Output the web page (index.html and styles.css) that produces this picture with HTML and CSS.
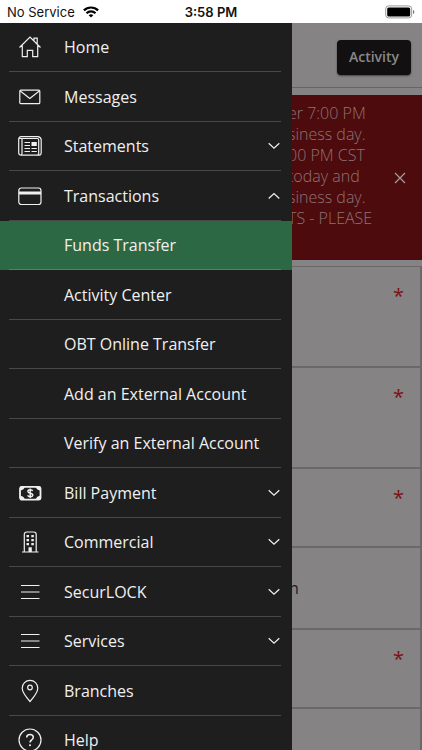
FILE: index.html
```html
<!DOCTYPE html>
<html lang="en">
<head>
<meta charset="utf-8">
<meta name="viewport" content="width=device-width, initial-scale=1">
<title>Funds Transfer</title>
<link rel="stylesheet" href="styles.css">
</head>
<body>
<div class="status">
  <div class="carrier">No Service
    <svg width="16" height="12" viewBox="0 0 16 12" fill="none" stroke="#000" stroke-width="2.2"><path d="M.9 4.4a10.2 10.2 0 0 1 14.2 0M3.5 7.2a6.4 6.4 0 0 1 9 0"/><path d="M8 11.6 5.7 9.3a3.3 3.3 0 0 1 4.6 0z" fill="#000" stroke="none"/></svg>
  </div>
  <div class="time">3:58 PM</div>
  <div class="battery">
    <svg width="30" height="14" viewBox="0 0 30 14"><rect x=".7" y=".9" width="26" height="12" rx="3" fill="none" stroke="#999" stroke-width="1"/><rect x="2.2" y="2.4" width="23" height="9" rx="1.5"/><path d="M28 5v4q1.400-.6 1.400-2T28 5" fill="#777"/></svg>
  </div>
</div>
<div class="app">
  <nav class="drawer">
    <ul class="menu">
      <li><a class="item" href="#home"><svg class="icon" viewBox="0 0 24 24"><path d="M1.500 12.500 12 2l10.500 10.500M4.300 10.500v11.200h5v-6.400h5.400v6.400h5V10.500M16 5.500V3.200h3.200v5.600"/></svg><span>Home</span></a></li>
      <li><a class="item" href="#messages"><svg class="icon" viewBox="0 0 24 24"><rect x="1.800" y="5.200" width="20" height="13.500" rx="1"/><path d="m2.300 6 9.500 7.500L21.300 6"/></svg><span>Messages</span></a></li>
      <li><button class="item" aria-expanded="false"><svg class="icon" viewBox="0 0 24 24"><path d="M3.200 2.700h16.500q3 .3 3.500 3v13q0 2.500-2.500 2.500H3.200q-2.500 0-2.500-2.500V5.200q0-2.500 2.500-2.500zM1.500 4.500h17.700q1.500 0 1.500 1.500v13q.2 1.500-1 1.700M4 5v14.500q-.2 1.500-1.500 1.500M6.500 8.500H12M6.500 11.500H12M6.500 14.500H12M6.500 17.500H12M13.500 14.500h5.300M13.500 17.500h5.300"/><path class="solid" d="M13.500 8h5.300v4h-5.300z"/></svg><span>Statements</span><svg class="chevron" viewBox="0 0 14 14"><path d="m1.700 4.200 5.300 5 5.300-5"/></svg></button></li>
      <li><button class="item" aria-expanded="true"><svg class="icon" viewBox="0 0 24 24"><rect x=".8" y="4" width="22.200" height="16.500" rx="2.500"/><path class="solid" d="M1 7.500h22v3H1z"/></svg><span>Transactions</span><svg class="chevron" viewBox="0 0 14 14"><path d="m1.700 9.500 5.300-5 5.300 5"/></svg></button></li>
      <li class="active"><a class="item sub" href="#transfer" aria-current="page"><span>Funds Transfer</span></a></li>
      <li><a class="item sub" href="#activity"><span>Activity Center</span></a></li>
      <li><a class="item sub" href="#obt"><span>OBT Online Transfer</span></a></li>
      <li><a class="item sub" href="#add"><span>Add an External Account</span></a></li>
      <li><a class="item sub" href="#verify"><span>Verify an External Account</span></a></li>
      <li><button class="item" aria-expanded="false"><svg class="icon" viewBox="0 0 24 24"><rect x="2" y="5.800" width="20.500" height="12.800" rx="2" stroke-width="1.800"/><path class="solid" d="M2 5.500h5q-1 3.500-4.500 4zM22.500 5.500h-5q1 3.500 4.500 4zM2 18.800h5q-1-3.500-4.500-4zM22.500 18.800h-5q1-3.500 4.500-4z"/><path d="M14.700 10q-.6-1.200-2.500-1.200-2.300 0-2.300 1.700 0 1.300 2.300 1.700 2.600.4 2.600 1.900 0 1.600-2.500 1.600-2 0-2.700-1.300M12.200 7.500v9.500" stroke-width="1.400"/></svg><span>Bill Payment</span><svg class="chevron" viewBox="0 0 14 14"><path d="m1.700 4.200 5.300 5 5.300-5"/></svg></button></li>
      <li><button class="item" aria-expanded="false"><svg class="icon" viewBox="0 0 24 24"><path d="M4 22h16.500M6.300 22V4.500q0-2.500 2.500-2.500h6.900q2.500 0 2.500 2.500V22"/><path class="solid" d="M8.500 5H11v2.300H8.500zM13.300 5h2.500v2.300h-2.500zM8.500 9H11v2.300H8.500zM13.300 9h2.500v2.300h-2.500zM8.500 13H11v2.300H8.500zM13.300 13h2.500v2.300h-2.500zM10.500 17.300h3.300V22h-3.300z"/></svg><span>Commercial</span><svg class="chevron" viewBox="0 0 14 14"><path d="m1.700 4.200 5.300 5 5.300-5"/></svg></button></li>
      <li><button class="item" aria-expanded="false"><svg class="icon" viewBox="0 0 24 24"><path d="M3 5.500h18.500M3 12h18.500M3 18.500h18.500"/></svg><span>SecurLOCK</span><svg class="chevron" viewBox="0 0 14 14"><path d="m1.700 4.200 5.300 5 5.300-5"/></svg></button></li>
      <li><button class="item" aria-expanded="false"><svg class="icon" viewBox="0 0 24 24"><path d="M3 5.500h18.500M3 12h18.500M3 18.500h18.500"/></svg><span>Services</span><svg class="chevron" viewBox="0 0 14 14"><path d="m1.700 4.200 5.300 5 5.300-5"/></svg></button></li>
      <li><a class="item" href="#branches"><svg class="icon" viewBox="0 0 24 24"><path d="M12 22.500Q4.200 13.500 4.200 9.200a7.800 7.800 0 0 1 15.600 0Q19.800 13.500 12 22.500z"/><circle cx="12" cy="8.500" r="2.300"/></svg><span>Branches</span></a></li>
      <li><a class="item" href="#help"><svg class="icon" viewBox="0 0 24 24"><circle cx="12" cy="12" r="11"/><path d="M8.700 9.500q0-3 3.300-3t3.300 2.800q0 1.500-1.700 2.700-1.600 1-1.600 2.600" stroke-width="1.500"/><circle class="solid" cx="12" cy="17.200" r="1"/></svg><span>Help</span></a></li>
    </ul>
  </nav>
  <main class="page">
    <header class="bar"><button class="activity">Activity</button></header>
    <div class="alert" role="alert">
      <p>er 7:00 PM<br>siness day.<br>00 PM CST<br>today and<br>siness day.<br>TS - PLEASE</p>
      <button class="close" aria-label="Close"><svg width="12" height="12" viewBox="0 0 12 12"><path d="m1 1 10 10M11 1 1 11"/></svg></button>
    </div>
    <div class="fields">
      <div class="field tall"><span class="req">*</span></div>
      <div class="field tall"><span class="req">*</span></div>
      <div class="field"><span class="req">*</span></div>
      <div class="field option"><span>n</span></div>
      <div class="field"><span class="req">*</span></div>
      <div class="field"></div>
    </div>
  </main>
</div>
</body>
</html>
```
FILE: styles.css
```css
* { box-sizing: border-box; }

body {
  margin: 0;
  height: 100vh;
  overflow: hidden;
  display: flex;
  flex-direction: column;
  background: #858384;
  font-family: "Open Sans", "Noto Sans", sans-serif;
  font-size: 16px;
}

button {
  border: 0;
  padding: 0;
  background: none;
  color: inherit;
  font: inherit;
  text-align: left;
}

.status {
  flex: none;
  height: 23px;
  padding: 0 7px;
  display: grid;
  grid-template-columns: 1fr auto 1fr;
  align-items: center;
  background: #fff;
  color: #111;
  font-family: Inter, "Liberation Sans", sans-serif;
  font-size: 13px;
}

.carrier { display: flex; align-items: center; gap: 8px; }
.time { font-weight: 600; }
.battery { display: flex; justify-content: flex-end; }

.app { flex: 1; min-height: 0; display: flex; overflow: hidden; }

.drawer {
  position: relative;
  z-index: 1;
  flex: 0 0 292px;
  background: #1e1e1e;
  color: #f0f0f0;
}

.menu { list-style: none; margin: 0; padding: 0; }
.menu li { height: 49px; padding: 0 11px 0 9px; }
.menu li:nth-child(even) { height: 50px; }
.menu .active { background: #2d6845; }

.item {
  width: 100%;
  height: 100%;
  display: grid;
  grid-template-columns: 41px 1fr 14px;
  column-gap: 14px;
  align-items: center;
  border-bottom: 1px solid #484848;
  color: inherit;
  text-decoration: none;
}

.active .item { border-color: #5a8069; }
.sub span { grid-column: 2 / -1; }

.icon, .chevron, .close svg {
  fill: none;
  stroke: #f0f0f0;
  stroke-width: 1.2;
}

.icon { width: 24px; height: 24px; justify-self: center; }
.chevron { width: 14px; height: 14px; }
.icon .solid { fill: #f0f0f0; stroke: none; }

.page {
  flex: 1;
  min-width: 0;
  background: #858384;
}

.bar {
  height: 65px;
  padding: 17px 11px 0;
  display: flex;
  justify-content: flex-end;
  align-items: flex-start;
  border-bottom: 1px solid #666465;
}

.activity {
  height: 35px;
  padding: 0 12px 3px;
  border-radius: 4px;
  background: #121011;
  box-shadow: 0 1px 2px #444;
  color: #8a8889;
  font-size: 14px;
  font-weight: 600;
}

.alert {
  height: 165px;
  margin-top: 7px;
  padding: 8px 16px 0 0;
  display: flex;
  justify-content: space-between;
  background: #4d0b0d;
  color: #8c7374;
}

.alert p {
  margin: 0 0 0 -4px;
  font-size: 16px;
  font-weight: 300;
  line-height: 21px;
  white-space: nowrap;
}

.close { align-self: center; margin-bottom: 8px; line-height: 0; }
.close svg { stroke: #a59c9c; }

.fields {
  margin-top: 6px;
  border: solid #6a6869;
  border-width: 1px 2px 0 0;
}

.field {
  height: 79px;
  padding: 13px 16px 0 0;
  border-bottom: 2px solid #6a6869;
  text-align: right;
}

.tall { height: 101px; }
.req { color: #7d1012; font-size: 20px; line-height: 32px; }

.option {
  height: 82px;
  padding: 29px 0 0;
  color: #1e1e1e;
  text-align: left;
}

.option span { margin-left: -3px; }
```
